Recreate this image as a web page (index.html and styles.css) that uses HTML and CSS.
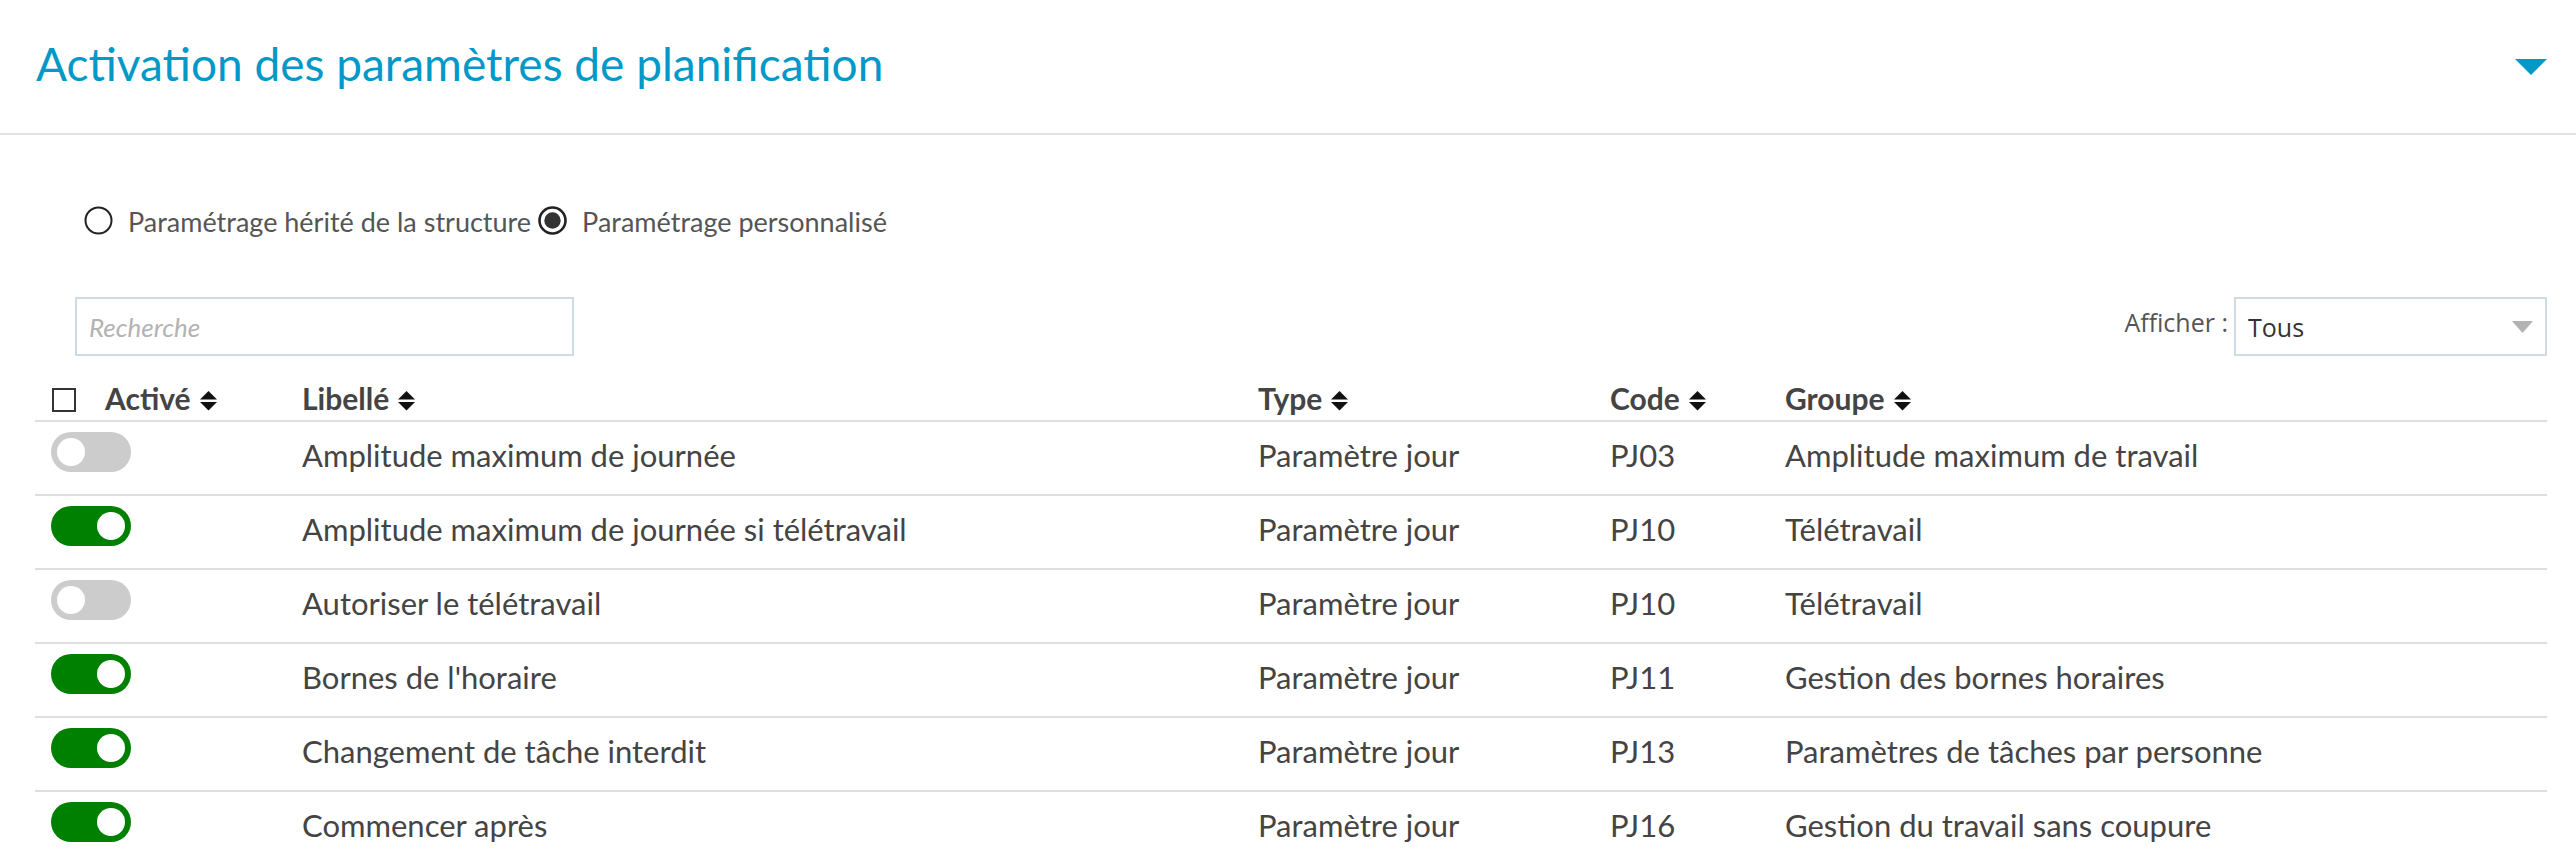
FILE: index.html
```html
<!DOCTYPE html>
<html lang="fr">
<head>
<meta charset="utf-8">
<title>Activation des paramètres de planification</title>
<link rel="stylesheet" href="styles.css">
</head>
<body>
<div class="panel">
  <header class="panel-head">
    <h1 class="panel-title">Activation des paramètres de planification</h1>
    <svg class="caret" width="32" height="16" viewBox="0 0 32 16"><polygon points="0,0 32,0 16,16"/></svg>
  </header>
  <section class="panel-body">
    <div class="mode">
      <label class="radio">
        <svg class="radio-icon" width="29" height="29" viewBox="0 0 29 29"><circle cx="14.5" cy="14.5" r="13" class="ring"/></svg>
        <span>Paramétrage hérité de la structure</span>
      </label>
      <label class="radio">
        <svg class="radio-icon" width="29" height="29" viewBox="0 0 29 29"><circle cx="14.5" cy="14.5" r="13" class="ring thick"/><circle cx="14.5" cy="14.5" r="8.2" class="dot"/></svg>
        <span>Paramétrage personnalisé</span>
      </label>
    </div>
    <div class="toolbar">
      <input class="search" type="text" placeholder="Recherche">
      <div class="filter">
        <span class="filter-label">Afficher :</span>
        <div class="select">
          <span>Tous</span>
          <svg class="select-arrow" width="21" height="12" viewBox="0 0 21 12"><polygon points="0,0 21,0 10.5,12"/></svg>
        </div>
      </div>
    </div>
    <div class="table">
      <div class="row head">
        <div class="cell first">
          <span class="checkbox"></span>
          <span>Activé</span>
          <svg class="sort" width="17" height="20" viewBox="0 0 17 20"><polygon points="8.5,0 17,8.5 0,8.5"/><polygon points="0,11 17,11 8.5,19.5"/></svg>
        </div>
        <div class="cell"><span>Libellé</span><svg class="sort" width="17" height="20" viewBox="0 0 17 20"><polygon points="8.5,0 17,8.5 0,8.5"/><polygon points="0,11 17,11 8.5,19.5"/></svg></div>
        <div class="cell"><span>Type</span><svg class="sort" width="17" height="20" viewBox="0 0 17 20"><polygon points="8.5,0 17,8.5 0,8.5"/><polygon points="0,11 17,11 8.5,19.5"/></svg></div>
        <div class="cell"><span>Code</span><svg class="sort" width="17" height="20" viewBox="0 0 17 20"><polygon points="8.5,0 17,8.5 0,8.5"/><polygon points="0,11 17,11 8.5,19.5"/></svg></div>
        <div class="cell"><span>Groupe</span><svg class="sort" width="17" height="20" viewBox="0 0 17 20"><polygon points="8.5,0 17,8.5 0,8.5"/><polygon points="0,11 17,11 8.5,19.5"/></svg></div>
      </div>

      <div class="row">
        <div class="cell first"><span class="toggle"><span class="knob"></span></span></div>
        <div class="cell">Amplitude maximum de journée</div>
        <div class="cell">Paramètre jour</div>
        <div class="cell">PJ03</div>
        <div class="cell">Amplitude maximum de travail</div>
      </div>
      <div class="row">
        <div class="cell first"><span class="toggle on"><span class="knob"></span></span></div>
        <div class="cell">Amplitude maximum de journée si télétravail</div>
        <div class="cell">Paramètre jour</div>
        <div class="cell">PJ10</div>
        <div class="cell">Télétravail</div>
      </div>
      <div class="row">
        <div class="cell first"><span class="toggle"><span class="knob"></span></span></div>
        <div class="cell">Autoriser le télétravail</div>
        <div class="cell">Paramètre jour</div>
        <div class="cell">PJ10</div>
        <div class="cell">Télétravail</div>
      </div>
      <div class="row">
        <div class="cell first"><span class="toggle on"><span class="knob"></span></span></div>
        <div class="cell">Bornes de l'horaire</div>
        <div class="cell">Paramètre jour</div>
        <div class="cell">PJ11</div>
        <div class="cell">Gestion des bornes horaires</div>
      </div>
      <div class="row">
        <div class="cell first"><span class="toggle on"><span class="knob"></span></span></div>
        <div class="cell">Changement de tâche interdit</div>
        <div class="cell">Paramètre jour</div>
        <div class="cell">PJ13</div>
        <div class="cell">Paramètres de tâches par personne</div>
      </div>
      <div class="row">
        <div class="cell first"><span class="toggle on"><span class="knob"></span></span></div>
        <div class="cell">Commencer après</div>
        <div class="cell">Paramètre jour</div>
        <div class="cell">PJ16</div>
        <div class="cell">Gestion du travail sans coupure</div>
      </div>
    </div>
  </section>
</div>
</body>
</html>
```

FILE: styles.css
```css
html, body {
  margin: 0;
  padding: 0;
  background: #ffffff;
}

body {
  font-family: Lato, "Open Sans", "Liberation Sans", sans-serif;
  color: #444444;
}

.panel {
  width: 2576px;
}

.panel-head {
  display: flex;
  justify-content: space-between;
  align-items: flex-start;
  height: 135px;
  box-sizing: border-box;
  padding: 0 29px 0 36px;
  border-bottom: 2px solid #e2e2e2;
}

.panel-title {
  margin: 36px 0 0 0;
  font-size: 46px;
  font-weight: 400;
  line-height: normal;
  color: #0299c8;
}

.caret {
  margin-top: 59px;
  fill: #0299c8;
}

.panel-body {
  padding: 0 29px 0 35px;
}

/* mode radios */
.mode {
  display: flex;
  align-items: flex-start;
  margin: 71px 0 0 49px;
  height: 32px;
  font-size: 27px;
  line-height: 32px;
  color: #555555;
}

.radio {
  display: flex;
  align-items: flex-start;
  margin-right: 7px;
}

.radio-icon {
  flex: none;
  margin-right: 15px;
}

.ring {
  fill: #ffffff;
  stroke: #222222;
  stroke-width: 2;
}

.ring.thick {
  stroke-width: 2.6;
}

.dot {
  fill: #333333;
}

/* toolbar */
.toolbar {
  display: flex;
  justify-content: space-between;
  align-items: flex-start;
  margin-top: 59px;
  height: 59px;
}

.search {
  margin: 0 0 0 40px;
  width: 499px;
  height: 59px;
  box-sizing: border-box;
  border: 2px solid #cfdae2;
  padding: 0 12px;
  font-family: Lato, sans-serif;
  font-size: 26px;
  color: #444444;
  outline: none;
  background: #ffffff;
}

.search::placeholder {
  font-style: italic;
  color: #b3b3b3;
}

.filter {
  display: flex;
  align-items: flex-start;
}

.filter-label {
  padding-top: 8px;
  margin-right: 6px;
  font-family: "Open Sans", sans-serif;
  font-size: 25px;
  line-height: normal;
  color: #555555;
}

.select {
  display: flex;
  align-items: center;
  justify-content: space-between;
  width: 313px;
  height: 59px;
  box-sizing: border-box;
  border: 2px solid #cfdae2;
  padding: 0 12px;
  font-family: "Open Sans", sans-serif;
  font-size: 25px;
  color: #333333;
}

.select-arrow {
  fill: #b3b3b3;
}

/* table */
.row {
  display: grid;
  grid-template-columns: 267px 956px 352px 175px 1fr;
  align-items: start;
  height: 74px;
  box-sizing: border-box;
  border-bottom: 2px solid #dedede;
  font-size: 31px;
  line-height: normal;
  color: #444444;
}

.row .cell {
  padding-top: 14px;
  white-space: nowrap;
}

.row .cell.first {
  padding-top: 10px;
  padding-left: 16px;
}

.row.head {
  height: 66px;
  font-size: 30px;
  font-weight: 700;
}

.row.head .cell {
  display: flex;
  align-items: flex-start;
  padding-top: 24px;
}

.row.head .cell.first {
  padding-top: 24px;
  padding-left: 17px;
}

.checkbox {
  flex: none;
  width: 24px;
  height: 24px;
  box-sizing: border-box;
  border: 2px solid #333333;
  margin: 8px 29px 0 0;
  background: #ffffff;
}

.sort {
  flex: none;
  margin: 11px 0 0 9px;
  fill: #111111;
}

.toggle {
  display: flex;
  align-items: center;
  justify-content: flex-start;
  width: 80px;
  height: 40px;
  box-sizing: border-box;
  padding: 0 6px;
  border-radius: 20px;
  background: #cccccc;
}

.toggle.on {
  justify-content: flex-end;
  background: #008000;
}

.knob {
  width: 28px;
  height: 28px;
  border-radius: 50%;
  background: #ffffff;
}
```
